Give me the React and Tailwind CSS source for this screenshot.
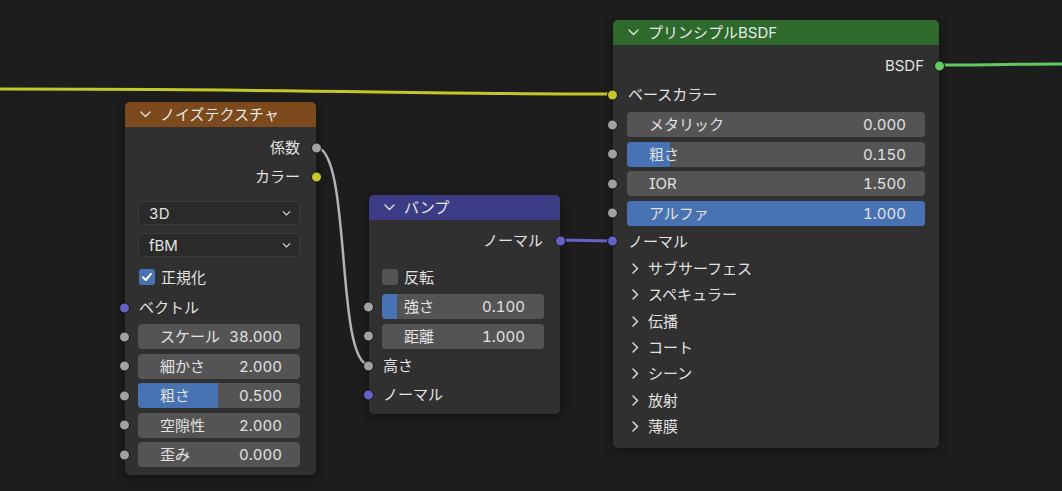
import React from "react";

const SOCK = {
  gray: "bg-[#a1a1a1]",
  yellow: "bg-[#c7c729]",
  purple: "bg-[#6363c7]",
  green: "bg-[#63c763]",
};

const Socket = ({ side, color }) => (
  <span
    className={`absolute top-1/2 -translate-y-1/2 w-[11px] h-[11px] rounded-full border border-[#161616] ${
      side === "left" ? "-left-[6px]" : "-right-[6px]"
    } ${SOCK[color]}`}
  />
);

const ChevronDown = ({ className = "" }) => (
  <svg width="11" height="7" viewBox="0 0 11 7" className={className}>
    <path d="M1 1 L5.5 5.5 L10 1" fill="none" stroke="#d8d8d8" strokeWidth="1.5" strokeLinecap="round" strokeLinejoin="round" />
  </svg>
);

const ChevronRight = () => (
  <svg width="7" height="11" viewBox="0 0 7 11">
    <path d="M1 1 L5.5 5.5 L1 10" fill="none" stroke="#d8d8d8" strokeWidth="1.5" strokeLinecap="round" strokeLinejoin="round" />
  </svg>
);

const Node = ({ className, header, title, children }) => (
  <div className={`absolute rounded-[5px] bg-[#303030] shadow-[0_2px_8px_rgba(0,0,0,0.45)] ${className}`}>
    <div className={`h-[25px] rounded-t-[5px] flex items-center pl-[15px] gap-[9px] text-[15px] text-[#e8e8e8] ${header}`}>
      <ChevronDown />
      <span>{title}</span>
    </div>
    {children}
  </div>
);

const Output = ({ label, color, pr = "pr-[16px]" }) => (
  <div className={`relative h-[29px] flex items-center justify-end ${pr}`}>
    <span>{label}</span>
    <Socket side="right" color={color} />
  </div>
);

const Input = ({ label, color, pl = "pl-[15px]", h = "h-[29px]" }) => (
  <div className={`relative ${h} flex items-center ${pl}`}>
    {color && <Socket side="left" color={color} />}
    <span>{label}</span>
  </div>
);

const Field = ({ label, value, fill, socket = true, px, lp = "pl-[22px]", vp = "pr-[19px]", mt = "mt-[4.5px]" }) => (
  <div className={`relative h-[25px] flex ${px} ${mt}`}>
    {socket && <Socket side="left" color="gray" />}
    <div className="relative flex-1 rounded-[4px] bg-[#545454] overflow-hidden flex items-center justify-between">
      {fill && <div className={`absolute left-0 top-0 bottom-0 bg-[#4772b3] ${fill}`} />}
      <span className={`relative ${lp}`}>{label}</span>
      <span className={`relative ${vp}`}>{value}</span>
    </div>
  </div>
);

const Dropdown = ({ label, mt }) => (
  <div className={`pl-[13px] pr-[16px] ${mt}`}>
    <div className="h-[24px] rounded-[5px] bg-[#2a2a2a] border border-[#3b3b3b] flex items-center justify-between pl-[10px] pr-[7px]">
      <span>{label}</span>
      <ChevronDown className="scale-75" />
    </div>
  </div>
);

const Checkbox = ({ label, checked, pl, mt }) => (
  <div className={`h-[24px] flex items-center gap-[6px] ${pl} ${mt}`}>
    <span
      className={`w-[16px] h-[16px] rounded-[3px] flex items-center justify-center ${
        checked ? "bg-[#4772b3]" : "bg-[#545454]"
      }`}
    >
      {checked && (
        <svg width="12" height="12" viewBox="0 0 12 12">
          <path d="M2 6.3 L4.8 9 L10 2.8" fill="none" stroke="#ffffff" strokeWidth="2" strokeLinecap="round" strokeLinejoin="round" />
        </svg>
      )}
    </span>
    <span>{label}</span>
  </div>
);

const panels = ["サブサーフェス", "スペキュラー", "伝播", "コート", "シーン", "放射", "薄膜"];

export default function App() {
  return (
    <div className="relative w-[1062px] h-[491px] overflow-hidden bg-[#1d1d1d] text-[15px] text-[#e2e2e2] leading-none font-[Inter,'Noto_Sans_CJK_JP',sans-serif] tabular-nums [font-feature-settings:'tnum','cv08']">
      {/* links */}
      <svg className="absolute inset-0" width="1062" height="491">
        <path d="M0 89 C 300 89, 420 94, 613 94" fill="none" stroke="#c7c729" strokeWidth="3" />
        <path d="M939 65 C 1000 65, 1010 64, 1062 64" fill="none" stroke="#63c763" strokeWidth="3" />
        <path d="M560 240 L613 241" fill="none" stroke="#6363c7" strokeWidth="3" />
        <path d="M316 147 C 352 150, 335 362, 369 365" fill="none" stroke="#b3b3b3" strokeWidth="2.5" />
      </svg>

      {/* Noise Texture */}
      <Node className="left-[125px] top-[102px] w-[191px]" header="bg-[#7c4a1d]" title="ノイズテクスチャ">
        <div className="pt-[6px] pb-[8px]">
          <Output label="係数" color="gray" />
          <Output label="カラー" color="yellow" />
          <Dropdown label="3D" mt="mt-[10px]" />
          <Dropdown label="fBM" mt="mt-[8px]" />
          <Checkbox label="正規化" checked pl="pl-[14px]" mt="mt-[8px]" />
          <Input label="ベクトル" color="purple" h="h-[29px] mt-[4px]" pl="pl-[14px]" />
          <Field label="スケール" value="38.000" px="pl-[13px] pr-[16px]" mt="mt-[2px]" vp="pr-[18px]" />
          <Field label="細かさ" value="2.000" px="pl-[13px] pr-[16px]" vp="pr-[18px]" />
          <Field label="粗さ" value="0.500" fill="w-[80px]" px="pl-[13px] pr-[16px]" vp="pr-[18px]" />
          <Field label="空隙性" value="2.000" px="pl-[13px] pr-[16px]" vp="pr-[18px]" />
          <Field label="歪み" value="0.000" px="pl-[13px] pr-[16px]" vp="pr-[18px]" />
        </div>
      </Node>

      {/* Bump */}
      <Node className="left-[369px] top-[195px] w-[191px]" header="bg-[#3c3b85]" title="バンプ">
        <div className="pt-[6px] pb-[5px]">
          <Output label="ノーマル" color="purple" pr="pr-[17px]" />
          <Checkbox label="反転" pl="pl-[13px]" mt="mt-[10px]" />
          <Field label="強さ" value="0.100" fill="w-[15px]" px="pl-[13px] pr-[16px]" mt="mt-[5px]" />
          <Field label="距離" value="1.000" px="pl-[13px] pr-[16px]" />
          <Input label="高さ" color="gray" pl="pl-[14px]" h="h-[29px] mt-[2.5px]" />
          <Input label="ノーマル" color="purple" pl="pl-[14px]" />
        </div>
      </Node>

      {/* Principled BSDF */}
      <Node className="left-[613px] top-[20px] w-[326px]" header="bg-[#2d6a2c]" title="プリンシプルBSDF">
        <div className="pt-[6px] pb-[8px]">
          <Output label="BSDF" color="green" pr="pr-[15px]" />
          <Input label="ベースカラー" color="yellow" pl="pl-[15px]" />
          <Field label="メタリック" value="0.000" px="pl-[14px] pr-[14px]" mt="mt-[3px]" />
          <Field label="粗さ" value="0.150" fill="w-[43px]" px="pl-[14px] pr-[14px]" />
          <Field label="IOR" value="1.500" px="pl-[14px] pr-[14px]" />
          <Field label="アルファ" value="1.000" fill="w-full" px="pl-[14px] pr-[14px]" />
          <Input label="ノーマル" color="purple" pl="pl-[15px]" h="h-[29px] mt-[1px]" />
          {panels.map((p) => (
            <div key={p} className="h-[26.33px] flex items-center pl-[19px] gap-[9px]">
              <ChevronRight />
              <span>{p}</span>
            </div>
          ))}
        </div>
      </Node>
    </div>
  );
}
